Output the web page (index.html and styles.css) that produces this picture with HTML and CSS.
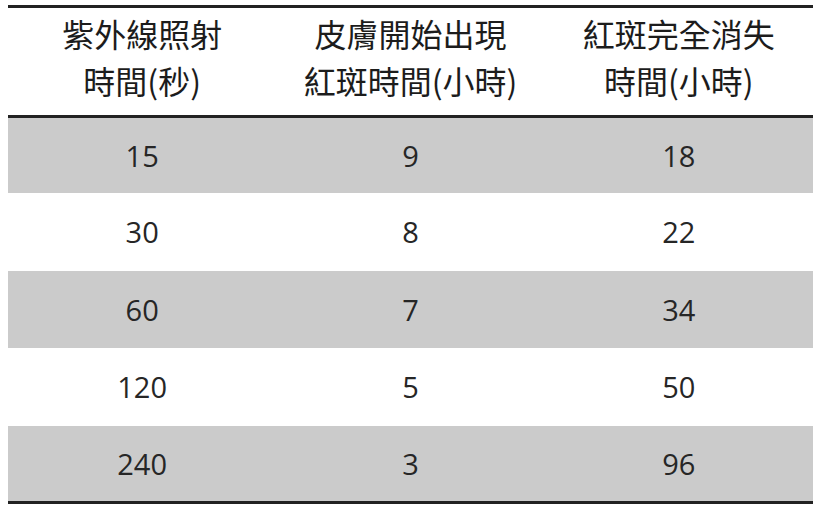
FILE: index.html
```html
<!DOCTYPE html>
<html lang="zh-Hant">
<head>
<meta charset="utf-8">
<link rel="stylesheet" href="styles.css">
</head>
<body>
<div class="table">
  <div class="head">
    <div class="th">紫外線照射<br>時間(秒)</div>
    <div class="th">皮膚開始出現<br>紅斑時間(小時)</div>
    <div class="th">紅斑完全消失<br>時間(小時)</div>
  </div>
  <div class="row gray r1"><div>15</div><div>9</div><div>18</div></div>
  <div class="row r2"><div>30</div><div>8</div><div>22</div></div>
  <div class="row gray r3"><div>60</div><div>7</div><div>34</div></div>
  <div class="row r4"><div>120</div><div>5</div><div>50</div></div>
  <div class="row gray r5"><div>240</div><div>3</div><div>96</div></div>
</div>
</body>
</html>
```

FILE: styles.css
```css
html, body {
  margin: 0;
  padding: 0;
  background: #ffffff;
}
body {
  padding: 5px 0 0 8px;
}
.table {
  width: 805px;
  border-top: 3px solid #222222;
  border-bottom: 3px solid #222222;
  color: #1c1c1c;
}
.head {
  display: grid;
  grid-template-columns: repeat(3, 1fr);
  align-items: center;
  height: 110px;
  box-sizing: border-box;
  padding-bottom: 9px;
  border-bottom: 3px solid #222222;
}
.th {
  text-align: center;
  font-family: "Noto Sans CJK TC", "Noto Sans CJK SC", sans-serif;
  font-size: 32px;
  line-height: 47px;
  font-weight: 400;
}
.row {
  display: grid;
  grid-template-columns: repeat(3, 1fr);
  align-items: center;
  text-align: center;
  font-family: "Open Sans", "Liberation Sans", sans-serif;
  font-size: 29px;
  line-height: 40px;
  color: #262626;
}
.gray {
  background: #cbcbcb;
}
.r1 { height: 75px; }
.r2 { height: 78px; }
.r3 { height: 77px; }
.r4 { height: 78px; }
.r5 { height: 75px; }
```
